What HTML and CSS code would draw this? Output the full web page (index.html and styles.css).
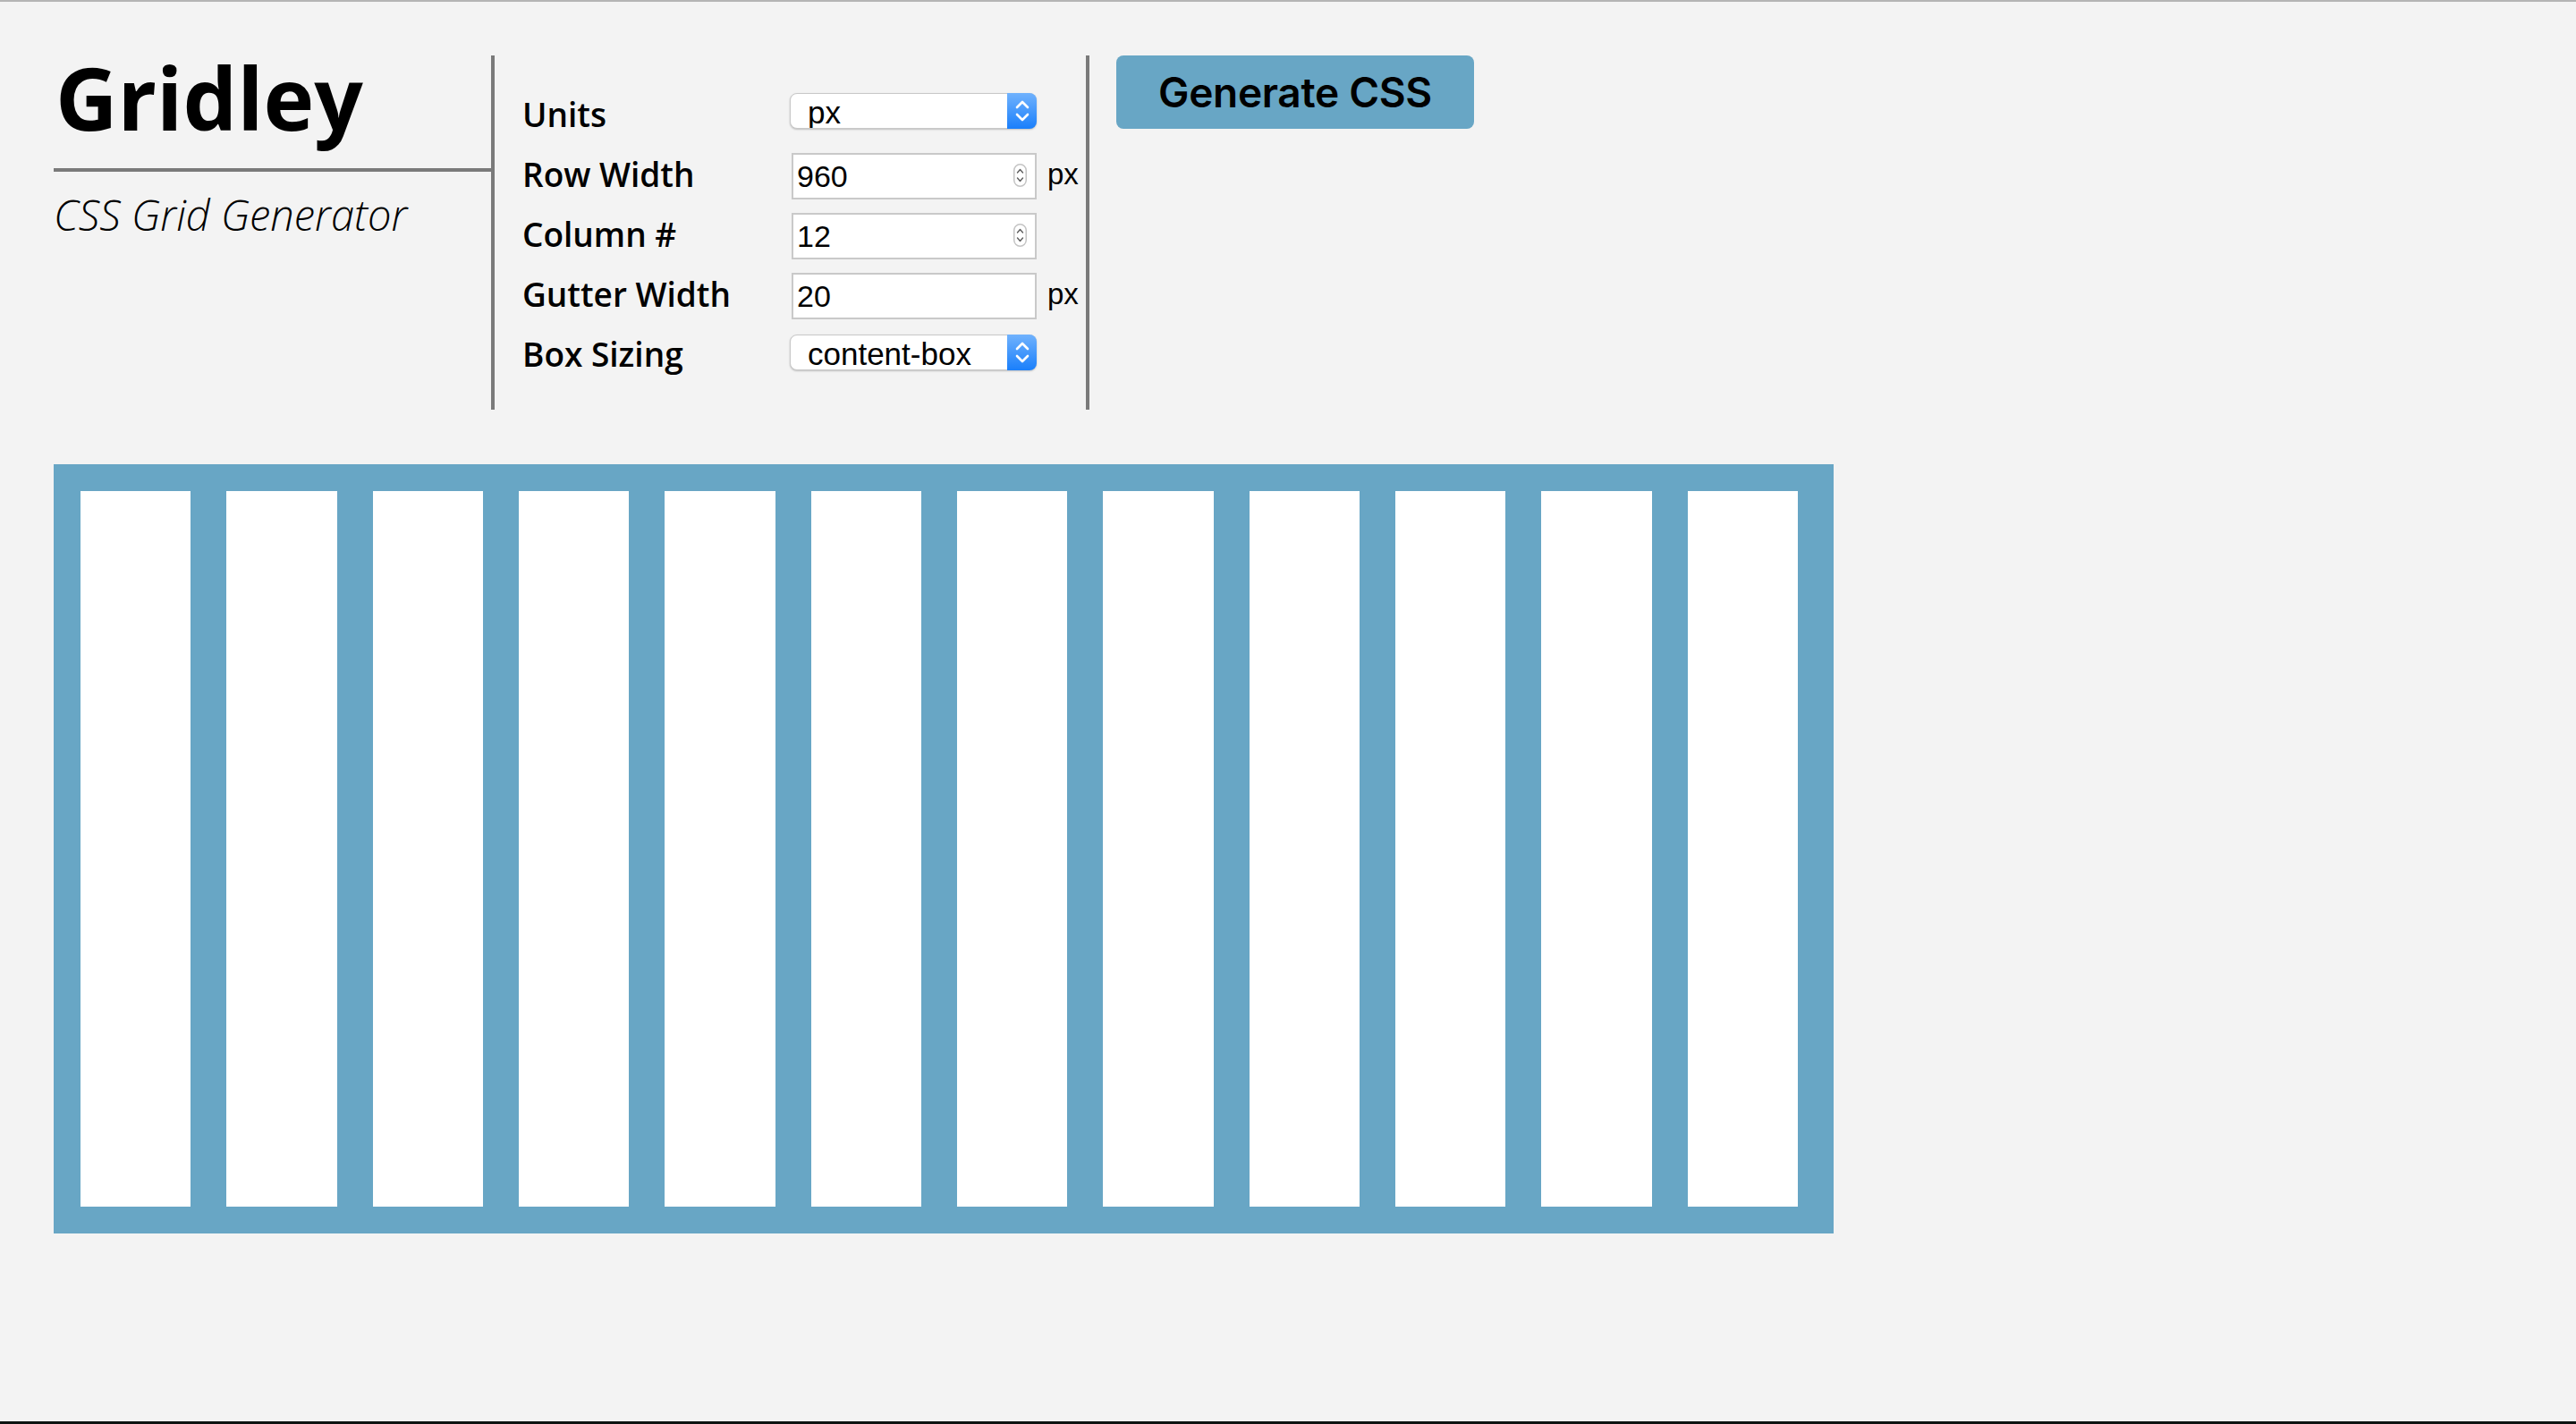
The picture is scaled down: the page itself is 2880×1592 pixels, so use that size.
FILE: index.html
```html
<!DOCTYPE html>
<html lang="en">
<head>
<meta charset="utf-8">
<title>Gridley - CSS Grid Generator</title>
<link rel="stylesheet" href="styles.css">
</head>
<body>
<div class="page">
  <header class="top">
    <div class="brand">
      <h1 class="title">Gridley</h1>
      <p class="subtitle">CSS Grid Generator</p>
    </div>
    <div class="settings">
      <div class="row">
        <label class="label">Units</label>
        <div class="select">
          <select class="select-field"><option>px</option><option>%</option></select>
          <span class="select-arrow"><svg width="16" height="26" viewBox="0 0 16 26"><path d="M2 9 L8 3 L14 9 M2 17 L8 23 L14 17" fill="none" stroke="#fff" stroke-width="2.6" stroke-linecap="round" stroke-linejoin="round"/></svg></span>
        </div>
        <span class="unit"></span>
      </div>
      <div class="row">
        <label class="label">Row Width</label>
        <div class="number">
          <input class="number-field" type="text" value="960">
          <span class="spin"><svg width="15" height="26" viewBox="0 0 15 26"><rect x="0.75" y="0.75" width="13.5" height="24.5" rx="6.75" fill="#fff" stroke="#c4c4c4" stroke-width="1.5"/><path d="M4.5 10 L7.5 6.5 L10.5 10 M4.5 16 L7.5 19.5 L10.5 16" fill="none" stroke="#606060" stroke-width="1.4" stroke-linecap="round" stroke-linejoin="round"/></svg></span>
        </div>
        <span class="unit">px</span>
      </div>
      <div class="row">
        <label class="label">Column #</label>
        <div class="number">
          <input class="number-field" type="text" value="12">
          <span class="spin"><svg width="15" height="26" viewBox="0 0 15 26"><rect x="0.75" y="0.75" width="13.5" height="24.5" rx="6.75" fill="#fff" stroke="#c4c4c4" stroke-width="1.5"/><path d="M4.5 10 L7.5 6.5 L10.5 10 M4.5 16 L7.5 19.5 L10.5 16" fill="none" stroke="#606060" stroke-width="1.4" stroke-linecap="round" stroke-linejoin="round"/></svg></span>
        </div>
        <span class="unit"></span>
      </div>
      <div class="row">
        <label class="label">Gutter Width</label>
        <div class="number">
          <input class="number-field" type="text" value="20">
        </div>
        <span class="unit">px</span>
      </div>
      <div class="row">
        <label class="label">Box Sizing</label>
        <div class="select select-last">
          <select class="select-field"><option>content-box</option><option>border-box</option></select>
          <span class="select-arrow"><svg width="16" height="26" viewBox="0 0 16 26"><path d="M2 9 L8 3 L14 9 M2 17 L8 23 L14 17" fill="none" stroke="#fff" stroke-width="2.6" stroke-linecap="round" stroke-linejoin="round"/></svg></span>
        </div>
        <span class="unit"></span>
      </div>
    </div>
    <button class="generate" type="button">Generate CSS</button>
  </header>
  <div class="grid">
    <div class="col"></div>
    <div class="col"></div>
    <div class="col"></div>
    <div class="col"></div>
    <div class="col"></div>
    <div class="col"></div>
    <div class="col"></div>
    <div class="col"></div>
    <div class="col"></div>
    <div class="col"></div>
    <div class="col"></div>
    <div class="col"></div>
  </div>
</div>
</body>
</html>
```
FILE: styles.css
```css
html, body {
  margin: 0;
  padding: 0;
  background: #f3f3f3;
}

.page {
  box-sizing: border-box;
  height: 1592px;
  border-top: 2px solid #b4b4b4;
  border-bottom: 3px solid #0d1411;
  padding: 60px 0 0 60px;
  font-family: "Open Sans", "Liberation Sans", sans-serif;
  color: #000;
}

.top {
  display: flex;
  align-items: flex-start;
  height: 396px;
}

.brand {
  width: 489px;
  flex: none;
}

.title {
  margin: 0;
  font-size: 96px;
  font-weight: 700;
  line-height: 94px;
  padding: 0 0 32px 2px;
  border-bottom: 4px solid #7a7a7a;
  letter-spacing: 0;
}

.subtitle {
  margin: 15px 0 0 0;
  font-size: 47px;
  font-weight: 300;
  font-style: italic;
  line-height: 66px;
}

.settings {
  flex: none;
  box-sizing: border-box;
  width: 669px;
  height: 396px;
  border-left: 4px solid #7a7a7a;
  border-right: 4px solid #7a7a7a;
  padding: 32px 0 0 31px;
}

.row {
  display: grid;
  grid-template-columns: 299px 276px 55px;
  height: 67px;
  align-items: start;
}

.label {
  font-size: 37px;
  font-weight: 600;
  line-height: 67px;
  white-space: nowrap;
}

.select {
  position: relative;
  margin-top: 10px;
  height: 40px;
}

.select-last {
  margin-top: 12px;
}

.select-field {
  appearance: none;
  -webkit-appearance: none;
  box-sizing: border-box;
  display: block;
  width: 276px;
  height: 40px;
  margin: 0;
  padding: 1px 0 0 19px;
  border: 1px solid #c8c8c8;
  border-radius: 8px;
  background: #fff;
  box-shadow: 0 1px 2px rgba(0, 0, 0, 0.22);
  font-family: "Liberation Sans", Arial, sans-serif;
  font-size: 35px;
  color: #000;
}

.select-arrow {
  position: absolute;
  top: 0;
  right: 0;
  width: 33px;
  height: 40px;
  border-radius: 0 8px 8px 0;
  background: linear-gradient(#70b2fd, #1a7ffb);
  display: flex;
  align-items: center;
  justify-content: center;
}

.number {
  position: relative;
  margin: 10px 0 0 2px;
  height: 52px;
}

.number-field {
  box-sizing: border-box;
  display: block;
  width: 274px;
  height: 52px;
  margin: 0;
  padding: 0 0 0 4px;
  border: 2px solid #c9c9c9;
  border-radius: 0;
  background: #fff;
  font-family: "Liberation Sans", Arial, sans-serif;
  font-size: 34px;
  color: #000;
  outline: none;
}

.spin {
  position: absolute;
  top: 12px;
  right: 11px;
  width: 15px;
  height: 26px;
  display: block;
}

.spin svg {
  display: block;
}

.unit {
  padding-left: 12px;
  font-family: "Liberation Sans", Arial, sans-serif;
  font-size: 33px;
  line-height: 67px;
}

.generate {
  flex: none;
  margin: 0 0 0 30px;
  width: 400px;
  height: 82px;
  padding: 0;
  border: none;
  border-radius: 8px;
  background: #68a6c5;
  color: #000;
  font-family: Inter, "Liberation Sans", sans-serif;
  font-size: 46px;
  font-weight: 600;
  letter-spacing: -0.3px;
}

.grid {
  display: flex;
  width: fit-content;
  margin-top: 61px;
  padding: 30px 0 30px 30px;
  background: #68a6c5;
}

.col {
  width: 123.33px;
  height: 800px;
  margin-right: 40px;
  background: #fff;
}
```
